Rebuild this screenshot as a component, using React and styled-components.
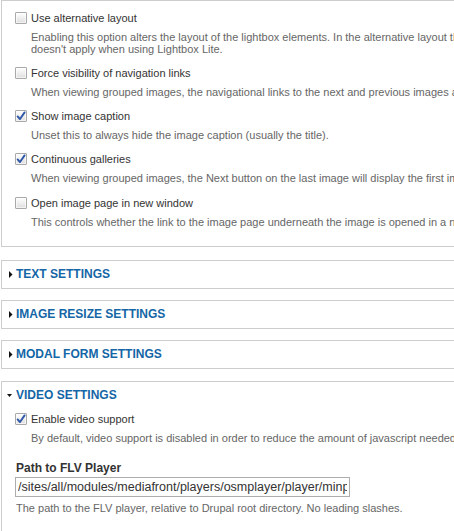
import React from "react";
import styled, { createGlobalStyle } from "styled-components";

const Global = createGlobalStyle`
  html, body { margin: 0; padding: 0; background: #fff; overflow: hidden; }
  body { font-family: "Liberation Sans", Arial, sans-serif; color: #333; }
`;

const Page = styled.div`
  width: 560px;
  padding-left: 1px;
`;

const Fieldset = styled.section`
  box-sizing: border-box;
  width: 540px;
  border: 1px solid #cdcdcd;
  margin-top: ${(p) => p.$mt || 0}px;
  padding: ${(p) => p.$pad};
`;

const Legend = styled.div`
  display: flex;
  align-items: center;
  height: 13px;
  font-family: "Liberation Sans", Arial, sans-serif;
  font-weight: bold;
  font-size: 12px;
  line-height: 13px;
  color: #1466a6;
  text-transform: uppercase;
  white-space: nowrap;
`;

const Arrow = styled.svg`
  flex: none;
  width: 9px;
  height: 13px;
`;

const Body = styled.div`
  padding-left: 8px;
`;

const Item = styled.div`
  margin-top: ${(p) => p.$mt || 0}px;
`;

const LabelRow = styled.label`
  display: flex;
  align-items: center;
  gap: 4px;
  height: 14px;
  font-size: 11px;
  line-height: 14px;
  color: #333;
  white-space: nowrap;
`;

const Box = styled.span`
  flex: none;
  box-sizing: border-box;
  width: 12px;
  height: 12px;
  border: 1px solid #a9a9a9;
  border-radius: 1px;
  background: linear-gradient(#ffffff, #dedede);
  display: flex;
  align-items: center;
  justify-content: center;
  box-shadow: inset 0 0 0 1px rgba(255, 255, 255, 0.6);
`;

const Description = styled.div`
  margin: ${(p) => p.$mt ?? 6}px 0 0 ${(p) => p.$ml ?? 16}px;
  font-size: 11px;
  line-height: 12px;
  color: #666;
  white-space: nowrap;
`;

const FieldLabel = styled.div`
  margin: 17px 0 0 1px;
  font-weight: bold;
  font-size: 12px;
  line-height: 14px;
  color: #333;
  white-space: nowrap;
`;

const TextInput = styled.input`
  display: block;
  box-sizing: border-box;
  width: 335px;
  height: 20px;
  margin: 2px 0 0 0;
  padding: 0 2px;
  border: 1px solid #adadad;
  border-radius: 0;
  font-family: "Liberation Sans", Arial, sans-serif;
  font-size: 12.5px;
  color: #333;
  background: #fff;
  outline: none;
`;

function Checkbox({ checked }) {
  return (
    <Box>
      {checked && (
        <svg width="10" height="10" viewBox="0 0 10 10">
          <path
            d="M1.6 5.4 L4 8 L8.6 1.4"
            fill="none"
            stroke="#2f57a8"
            strokeWidth="1.9"
            strokeLinecap="round"
            strokeLinejoin="round"
          />
        </svg>
      )}
    </Box>
  );
}

function Option({ label, checked, desc, mt }) {
  return (
    <Item $mt={mt}>
      <LabelRow>
        <Checkbox checked={checked} />
        {label}
      </LabelRow>
      <Description>{desc}</Description>
    </Item>
  );
}

function CollapsedTitle({ children }) {
  return (
    <Legend>
      <Arrow viewBox="0 0 9 13">
        <path d="M2 3 L5.5 6.5 L2 10 Z" fill="#111" />
      </Arrow>
      {children}
    </Legend>
  );
}

function ExpandedTitle({ children }) {
  return (
    <Legend>
      <Arrow viewBox="0 0 9 13">
        <path d="M0 5 L5 5 L2.5 8 Z" fill="#111" />
      </Arrow>
      {children}
    </Legend>
  );
}

export default function App() {
  return (
    <Page>
      <Global />
      <Fieldset $pad="10px 0 18px 13px">
        <Option
          label="Use alternative layout"
          desc={
            <>
              Enabling this option alters the layout of the lightbox elements. In the alternative layout the navigational links appear under the image
              <br />
              doesn't apply when using Lightbox Lite.
            </>
          }
        />
        <Option
          mt={11}
          label="Force visibility of navigation links"
          desc="When viewing grouped images, the navigational links to the next and previous images are always visible."
        />
        <Option
          mt={11}
          checked
          label="Show image caption"
          desc="Unset this to always hide the image caption (usually the title)."
        />
        <Option
          mt={11}
          checked
          label="Continuous galleries"
          desc="When viewing grouped images, the Next button on the last image will display the first image."
        />
        <Option
          mt={12}
          label="Open image page in new window"
          desc="This controls whether the link to the image page underneath the image is opened in a new window."
        />
      </Fieldset>

      <Fieldset $mt={13} $pad="7px 0 7px 5px">
        <CollapsedTitle>Text settings</CollapsedTitle>
      </Fieldset>
      <Fieldset $mt={11} $pad="7px 0 7px 5px">
        <CollapsedTitle>Image resize settings</CollapsedTitle>
      </Fieldset>
      <Fieldset $mt={11} $pad="7px 0 7px 5px">
        <CollapsedTitle>Modal form settings</CollapsedTitle>
      </Fieldset>

      <Fieldset $mt={12} $pad="7px 0 30px 5px">
        <ExpandedTitle>Video settings</ExpandedTitle>
        <Body>
          <Item $mt={10}>
            <LabelRow>
              <Checkbox checked />
              Enable video support
            </LabelRow>
            <Description>
              By default, video support is disabled in order to reduce the amount of javascript needed to run Lightbox2.
            </Description>
          </Item>
          <FieldLabel>Path to FLV Player</FieldLabel>
          <TextInput
            readOnly
            defaultValue="/sites/all/modules/mediafront/players/osmplayer/player/minplayer.swf"
          />
          <Description $mt={5} $ml={1}>
            The path to the FLV player, relative to Drupal root directory. No leading slashes.
          </Description>
        </Body>
      </Fieldset>
    </Page>
  );
}
